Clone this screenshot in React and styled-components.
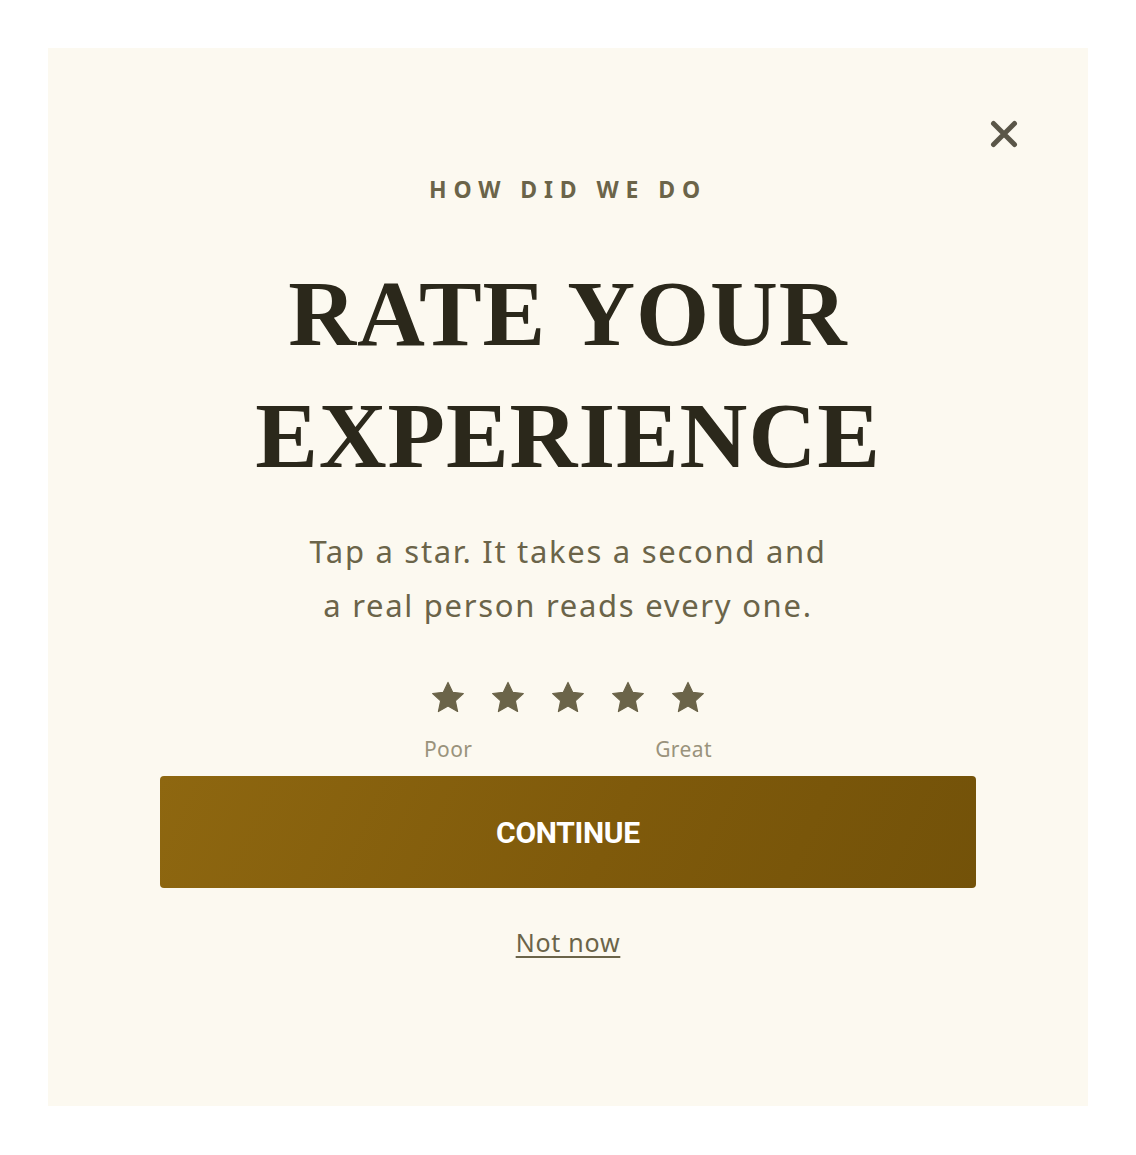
import React, { useState } from "react";
import styled, { createGlobalStyle } from "styled-components";

const colors = {
  page: "#ffffff",
  card: "#fcf9f0",
  ink: "#2b281b",
  muted: "#6b6449",
  soft: "#9a937c",
  close: "#5a5648",
};

const GlobalStyle = createGlobalStyle`
  html, body {
    margin: 0;
    padding: 0;
    background: ${colors.page};
  }
  body {
    padding: 48px;
    font-family: "Noto Sans", "Open Sans", sans-serif;
  }
`;

const Card = styled.div`
  position: relative;
  width: 1040px;
  height: 1058px;
  box-sizing: border-box;
  background: ${colors.card};
  display: flex;
  flex-direction: column;
  align-items: center;
  padding-top: 126px;
`;

const CloseButton = styled.button`
  position: absolute;
  top: 72px;
  right: 70px;
  width: 28px;
  height: 28px;
  padding: 0;
  border: 0;
  background: transparent;
  color: ${colors.close};
  cursor: pointer;
  display: flex;
  align-items: center;
  justify-content: center;
`;

const Eyebrow = styled.p`
  margin: 0;
  font-family: "Noto Sans", sans-serif;
  font-size: 23px;
  font-weight: 700;
  letter-spacing: 0.3em;
  color: ${colors.muted};
  line-height: 30px;
`;

const Title = styled.h1`
  margin: 48px 0 0;
  font-family: "Liberation Serif", serif;
  font-size: 94px;
  font-weight: 700;
  line-height: 122px;
  text-align: center;
  color: ${colors.ink};
  letter-spacing: 0.01em;
`;

const Lead = styled.p`
  margin: 28px 0 0;
  font-family: "Noto Sans", sans-serif;
  font-size: 31px;
  letter-spacing: 0.055em;
  line-height: 54px;
  text-align: center;
  color: ${colors.muted};
`;

const Rating = styled.div`
  margin-top: 48px;
  display: flex;
  flex-direction: column;
  align-items: center;
`;

const Stars = styled.div`
  display: flex;
  gap: 24px;
`;

const StarButton = styled.button`
  width: 36px;
  height: 36px;
  padding: 0;
  border: 0;
  background: transparent;
  color: ${colors.muted};
  cursor: pointer;
  display: flex;
  align-items: center;
  justify-content: center;
`;

const Labels = styled.div`
  margin-top: 20px;
  width: 288px;
  display: flex;
  justify-content: space-between;
  font-family: "Noto Sans", sans-serif;
  font-size: 21px;
  letter-spacing: 0.02em;
  line-height: 26px;
  color: ${colors.soft};
`;

const Continue = styled.button`
  margin-top: 14px;
  width: 816px;
  height: 112px;
  border: 0;
  border-radius: 4px;
  background: linear-gradient(115deg, #8e6710 0%, #7f5a0b 55%, #735209 100%);
  color: #ffffff;
  font-family: "Roboto", sans-serif;
  font-size: 30px;
  font-weight: 700;
  letter-spacing: -0.01em;
  cursor: pointer;
`;

const NotNow = styled.a`
  margin-top: 38px;
  font-family: "Noto Sans", sans-serif;
  font-size: 25px;
  letter-spacing: 0.03em;
  line-height: 32px;
  color: ${colors.muted};
  text-decoration: underline;
  text-underline-offset: 4px;
  text-decoration-thickness: 2px;
  cursor: pointer;
`;

const StarIcon = () => (
  <svg width="36" height="36" viewBox="0 0 24 24" fill="currentColor">
    <path d="M12 1.6l3.1 6.6 7.1.8-5.3 4.9 1.5 7.1L12 17.4 5.6 21l1.5-7.1L1.8 9l7.1-.8z" strokeLinejoin="round" stroke="currentColor" strokeWidth="0.8" />
  </svg>
);

const CloseIcon = () => (
  <svg width="28" height="28" viewBox="0 0 28 28" fill="none" stroke="currentColor" strokeWidth="5" strokeLinecap="round">
    <path d="M3.5 3.5l21 21M24.5 3.5l-21 21" />
  </svg>
);

export default function App() {
  const [rating, setRating] = useState(0);

  return (
    <>
      <GlobalStyle />
      <Card>
        <CloseButton aria-label="Close">
          <CloseIcon />
        </CloseButton>
        <Eyebrow>HOW DID WE DO</Eyebrow>
        <Title>
          RATE YOUR
          <br />
          EXPERIENCE
        </Title>
        <Lead>
          Tap a star. It takes a second and
          <br />
          a real person reads every one.
        </Lead>
        <Rating>
          <Stars>
            {[1, 2, 3, 4, 5].map((n) => (
              <StarButton key={n} aria-label={`${n} stars`} onClick={() => setRating(n)}>
                <StarIcon />
              </StarButton>
            ))}
          </Stars>
          <Labels>
            <span>Poor</span>
            <span>Great</span>
          </Labels>
        </Rating>
        <Continue>CONTINUE</Continue>
        <NotNow>Not now</NotNow>
      </Card>
    </>
  );
}
